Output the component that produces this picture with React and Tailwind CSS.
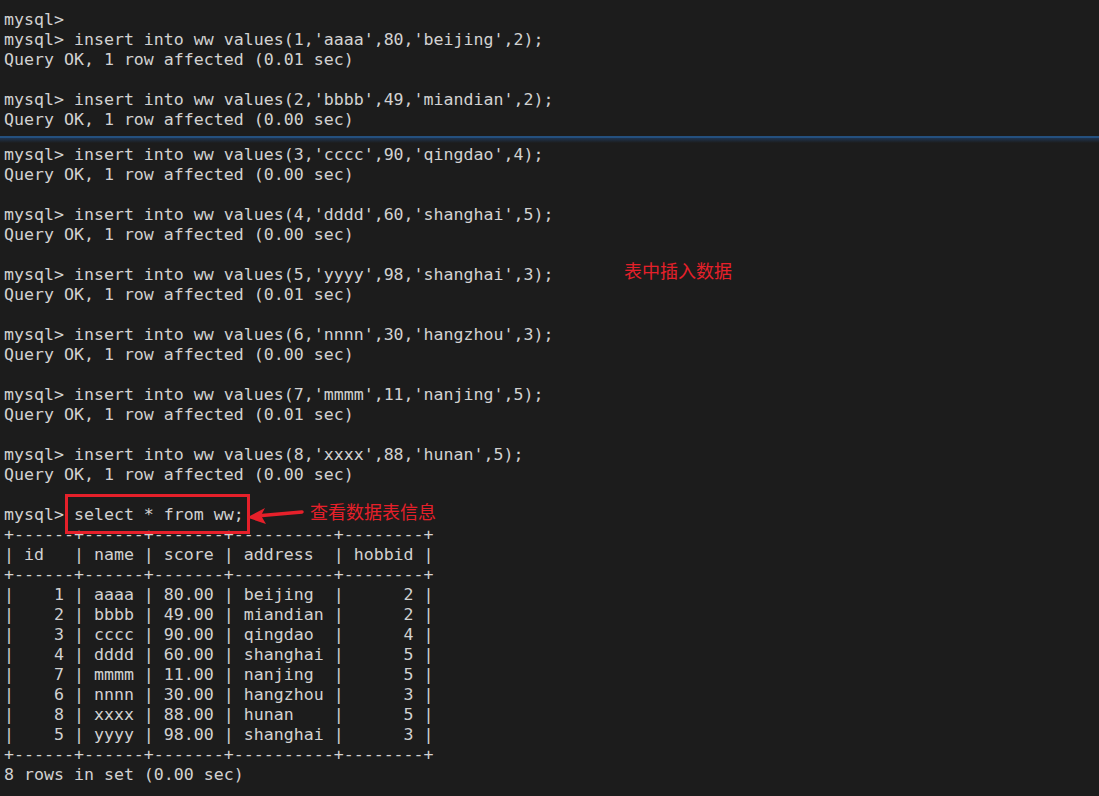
const partOne = [
  'mysql> ',
  "mysql> insert into ww values(1,'aaaa',80,'beijing',2);",
  'Query OK, 1 row affected (0.01 sec)',
  '',
  "mysql> insert into ww values(2,'bbbb',49,'miandian',2);",
  'Query OK, 1 row affected (0.00 sec)',
]

const inserts = [
  ["3,'cccc',90,'qingdao',4", '0.00'],
  ["4,'dddd',60,'shanghai',5", '0.00'],
  ["5,'yyyy',98,'shanghai',3", '0.01'],
  ["6,'nnnn',30,'hangzhou',3", '0.00'],
  ["7,'mmmm',11,'nanjing',5", '0.01'],
  ["8,'xxxx',88,'hunan',5", '0.00'],
]

const sep = '+------+------+-------+----------+--------+'

const rows = [
  ['1', 'aaaa', '80.00', 'beijing', '2'],
  ['2', 'bbbb', '49.00', 'miandian', '2'],
  ['3', 'cccc', '90.00', 'qingdao', '4'],
  ['4', 'dddd', '60.00', 'shanghai', '5'],
  ['7', 'mmmm', '11.00', 'nanjing', '5'],
  ['6', 'nnnn', '30.00', 'hangzhou', '3'],
  ['8', 'xxxx', '88.00', 'hunan', '5'],
  ['5', 'yyyy', '98.00', 'shanghai', '3'],
]

const partTwo = [
  ...inserts.flatMap(([v, t], i) => [
    ...(i > 0 ? [''] : []),
    `mysql> insert into ww values(${v});`,
    `Query OK, 1 row affected (${t} sec)`,
  ]),
  '',
  'mysql> select * from ww;',
  sep,
  '| id   | name | score | address  | hobbid |',
  sep,
  ...rows.map(([id, n, s, a, h]) =>
    `| ${id.padStart(4)} | ${n} | ${s} | ${a.padEnd(8)} | ${h.padStart(6)} |`),
  sep,
  '8 rows in set (0.00 sec)',
]

function Lines({ lines }) {
  return (
    <div>
      {lines.map((l, i) => (
        <div key={i} className="h-5 whitespace-pre">{l || ' '}</div>
      ))}
    </div>
  )
}

const cjk = { fontFamily: '"Noto Sans CJK SC", "Noto Sans", sans-serif' }

export default function App() {
  return (
    <div className="relative h-[796px] w-[1099px] overflow-hidden bg-[#1c1c1c] pt-[10px] pl-1 text-[16.6px] leading-5 text-[#d2d2d2] font-['DejaVu_Sans_Mono',monospace]">
      <Lines lines={partOne} />
      <div className="-ml-1 mt-[6px] h-[2px] bg-[#24507f]" />
      <div className="-ml-1 h-[5px] bg-gradient-to-b from-[#1e3450] to-[#1c1c1c]" />
      <div className="h-[2px]" />
      <Lines lines={partTwo} />

      <div className="absolute left-[65px] top-[494px] h-[40px] w-[185px] border-[3px] border-[#e5202a]" />
      <svg className="absolute left-[244px] top-[502px]" width="62" height="30" viewBox="0 0 62 30">
        <path d="M18 13.5 L58 10" stroke="#e5202a" strokeWidth="3.5" strokeLinecap="round" fill="none" />
        <path d="M3 15.5 L21 6 L17 13.5 L22 22 Z" fill="#e5202a" />
      </svg>
      <div className="absolute left-[310px] top-[499px] text-[18px] leading-6 text-[#e5202a]" style={cjk}>查看数据表信息</div>
      <div className="absolute left-[624px] top-[258px] text-[18px] leading-6 text-[#e5202a]" style={cjk}>表中插入数据</div>
    </div>
  )
}
